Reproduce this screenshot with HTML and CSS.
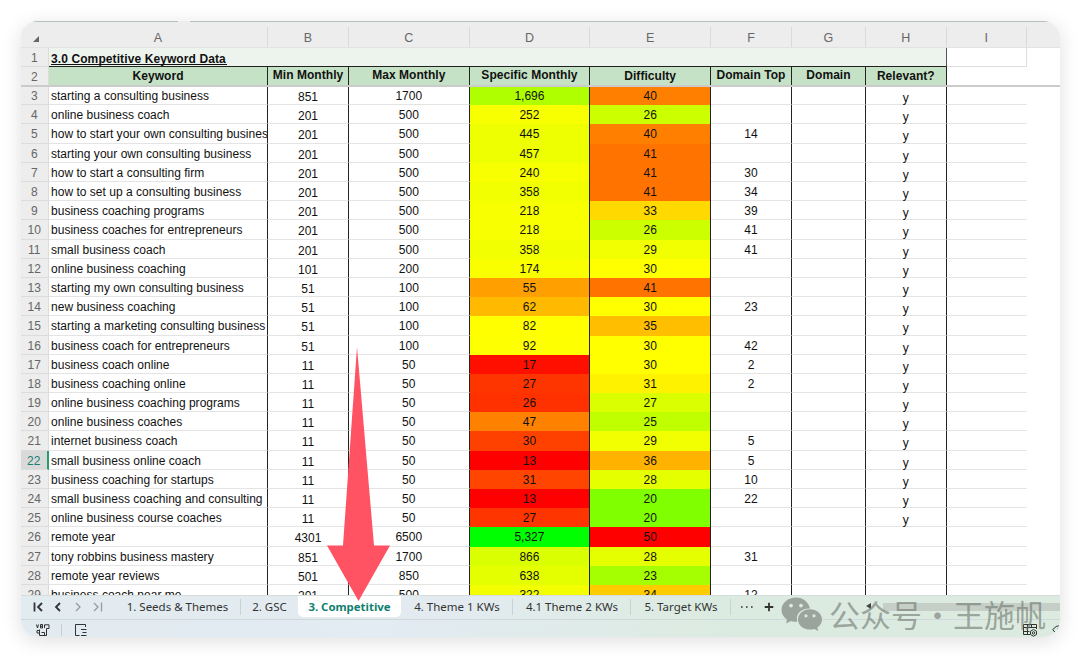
FILE: index.html
```html
<!DOCTYPE html>
<html lang="en">
  <head>
    <meta charset="UTF-8" />
    <meta name="viewport" content="width=device-width, initial-scale=1.0" />
    <title>Competitive Keyword Data</title>
    <link rel="stylesheet" href="styles.css">
  </head>
  <body>
    <div class="window">
      <div class="top-edge"><span></span><span></span></div>

      <div class="sheet">
        <div class="row letters">
          <div class="num"><i class="corner"></i></div>
          <div>A</div>
          <div>B</div>
          <div>C</div>
          <div>D</div>
          <div>E</div>
          <div>F</div>
          <div>G</div>
          <div>H</div>
          <div>I</div>
        </div>
        <div class="row title-row">
          <div class="num">1</div>
          <div class="title"><span>3.0 Competitive Keyword Data</span></div>
          <div class="empty"></div>
        </div>
        <div class="row head-row">
          <div class="num">2</div>
          <div class="cell low">Keyword</div>
          <div class="cell">Min Monthly</div>
          <div class="cell">Max Monthly</div>
          <div class="cell">Specific Monthly</div>
          <div class="cell low">Difficulty</div>
          <div class="cell">Domain Top</div>
          <div class="cell">Domain</div>
          <div class="cell low">Relevant?</div>
        </div>
        <div class="freeze-line"></div>
        <div class="rows" id="rows"></div>
      </div>

      <div class="tabs">
        <div class="nav">
          <svg width="12" height="12" viewBox="0 0 12 12"><path d="M2.5 1.5v9M10 2L6 6l4 4" /></svg>
          <svg width="12" height="12" viewBox="0 0 12 12"><path d="M8 2L4 6l4 4" /></svg>
          <svg class="off" width="12" height="12" viewBox="0 0 12 12"><path d="M4 2l4 4-4 4" /></svg>
          <svg class="off" width="12" height="12" viewBox="0 0 12 12"><path d="M2 2l4 4-4 4M9.5 1.5v9" /></svg>
        </div>
        <div class="tab t1">1. Seeds &amp; Themes</div>
        <div class="tab t2">2. GSC</div>
        <div class="tab active">3. Competitive</div>
        <div class="tab t4">4. Theme 1 KWs</div>
        <div class="tab t5">4.1 Theme 2 KWs</div>
        <div class="tab t6">5. Target KWs</div>
        <svg class="more" width="14" height="12" viewBox="0 0 14 12"><path d="M1 6h1.6M6 6h1.6M11 6h1.6" /></svg>
        <svg class="plus" width="10" height="10" viewBox="0 0 10 10"><path d="M5 .7v8.6M.7 5h8.6" /></svg>
        <div class="scroll"><i></i><b></b></div>
      </div>

      <div class="status">
        <svg class="s1" width="15" height="13" viewBox="0 0 15 13">
          <path d="M.5.5l1 3.500 1-3.500M4.500.5v3.500h2V.5zM4.500 2.300h2M8.500 4V.8H13v3.700h-2.500v7H8M3.500 6.500H1v2.500h2.500M3.500 5.500V11.500H8.500V8.500H5.500" />
        </svg>
        <i class="split"></i>
        <svg class="s2" width="14" height="12" viewBox="0 0 14 12">
          <path d="M11.500 3V.5H1.500v11h4M7 5.500h5.500M8.500 8.500h4M7 11.500h5.500" />
        </svg>
        <svg class="s3" width="16" height="14" viewBox="0 0 16 14">
          <path d="M8 11.500H1.500V1.500h13V6M1.500 4.500h13M5.500 1.500v10M1.500 8.500h6M9.500 1.500v3" />
          <path d="M11.500 6.500l3 1.700v3.300l-3 1.700-3-1.700V8.200z" />
          <circle cx="11.500" cy="9.900" r="1.200" />
        </svg>
        <svg class="s4" width="8" height="12" viewBox="0 0 8 12">
          <path d="M8 1.500Q4 1.500.7 5.500 2.500 8.500 5 9.500M8 3.700Q5.300 3.700 5.300 6.200 5.500 8 8 8" />
        </svg>
      </div>
    </div>

    <svg class="arrow" width="66" height="256" viewBox="0 0 66 256">
      <path d="M32 0L49 198.500H65L33.500 254 2 198.500H18z" />
    </svg>

    <div class="watermark">
      <svg width="41" height="34" viewBox="0 0 41 34">
        <path fill-rule="evenodd" d="M15 .5C7 .5.500 6 .500 13c0 4 2.300 7.400 5.600 9.700L5 26.500l5-2.500c2 .7 4 .9 6.200.8-2-8 4.200-13.500 12.800-13.200C27.600 5 21.800.5 15 .5zM10 6.700a1.900 1.900 0 1 1 0 3.800 1.900 1.900 0 0 1 0-3.800zM20 6.700a1.900 1.900 0 1 1 0 3.800 1.900 1.900 0 0 1 0-3.800z" />
        <path fill-rule="evenodd" d="M29 12.300c-6.600 0-12 4.500-12 10.100s5.400 10.100 12 10.100c1.500 0 3-.2 4.300-.6l4 2-1-3.300c2.900-2 4.700-4.900 4.700-8.200 0-5.600-5.400-10.100-12-10.100zM25 17.200a1.600 1.600 0 1 1 0 3.200 1.600 1.600 0 0 1 0-3.200zM33 17.200a1.600 1.600 0 1 1 0 3.200 1.600 1.600 0 0 1 0-3.200z" />
      </svg>
      <span>公众号</span><span class="dot">·</span><span>王施帆</span>
    </div>

    <script>
      // keyword, min, max, specific, difficulty, domain top, relevant
      const data = [
        ["starting a consulting business", 851, 1700, 1696, 40, "", "y"],
        ["online business coach", 201, 500, 252, 26, "", "y"],
        ["how to start your own consulting business", 201, 500, 445, 40, 14, "y"],
        ["starting your own consulting business", 201, 500, 457, 41, "", "y"],
        ["how to start a consulting firm", 201, 500, 240, 41, 30, "y"],
        ["how to set up a consulting business", 201, 500, 358, 41, 34, "y"],
        ["business coaching programs", 201, 500, 218, 33, 39, "y"],
        ["business coaches for entrepreneurs", 201, 500, 218, 26, 41, "y"],
        ["small business coach", 201, 500, 358, 29, 41, "y"],
        ["online business coaching", 101, 200, 174, 30, "", "y"],
        ["starting my own consulting business", 51, 100, 55, 41, "", "y"],
        ["new business coaching", 51, 100, 62, 30, 23, "y"],
        ["starting a marketing consulting business", 51, 100, 82, 35, "", "y"],
        ["business coach for entrepreneurs", 51, 100, 92, 30, 42, "y"],
        ["business coach online", 11, 50, 17, 30, 2, "y"],
        ["business coaching online", 11, 50, 27, 31, 2, "y"],
        ["online business coaching programs", 11, 50, 26, 27, "", "y"],
        ["online business coaches", 11, 50, 47, 25, "", "y"],
        ["internet business coach", 11, 50, 30, 29, 5, "y"],
        ["small business online coach", 11, 50, 13, 36, 5, "y"],
        ["business coaching for startups", 11, 50, 31, 28, 10, "y"],
        ["small business coaching and consulting", 11, 50, 13, 20, 22, "y"],
        ["online business course coaches", 11, 50, 27, 20, "", "y"],
        ["remote year", 4301, 6500, 5327, 50, "", ""],
        ["tony robbins business mastery", 851, 1700, 866, 28, 31, ""],
        ["remote year reviews", 501, 850, 638, 23, "", ""],
        ["business coach near me", 201, 500, 322, 34, 12, ""],
      ];

      // Red -> yellow -> green scale
      function scale(v, red, mid, green) {
        const toRed = (v - mid) / (red - mid);
        if (toRed > 0) {
          return `rgb(255, ${Math.round(255 * (1 - toRed))}, 0)`;
        }
        const toGreen = (v - mid) / (green - mid);
        return `rgb(${Math.round(255 * (1 - toGreen))}, 255, 0)`;
      }

      function addCell(row, text, cls, color) {
        const cell = document.createElement("div");
        cell.className = cls;
        cell.textContent = text;
        if (color) cell.style.backgroundColor = color;
        row.appendChild(cell);
      }

      const rowsEl = document.getElementById("rows");

      data.forEach((d, i) => {
        const row = document.createElement("div");
        row.className = "row";
        addCell(row, i + 3, i + 3 === 22 ? "num selected" : "num");
        addCell(row, d[0], "cell keyword");
        addCell(row, d[1], "cell min");
        addCell(row, d[2], "cell");
        addCell(row, d[3].toLocaleString("en-US"), "cell heat", scale(d[3], 13, 80, 5327));
        addCell(row, d[4], "cell heat", scale(d[4], 50, 30, 10));
        addCell(row, d[5], "cell");
        addCell(row, "", "cell");
        addCell(row, d[6], "cell relevant");
        addCell(row, "", "blank");
        rowsEl.appendChild(row);
      });
    </script>
  </body>
</html>
```
FILE: styles.css
```css
* {
  box-sizing: border-box;
}

body {
  margin: 0;
  height: 657px;
  padding: 21px 20px 20px 20.5px;
  overflow: hidden;
  background: #fff;
  font-family: "Liberation Sans", Arial, sans-serif;
  font-size: 12px;
  color: #111;
}

.window {
  height: 616px;
  display: flex;
  flex-direction: column;
  border-radius: 17px;
  overflow: hidden;
  background: #fff;
  box-shadow: 0 4px 20px rgba(0, 0, 0, 0.13);
}

.top-edge {
  height: 6px;
  padding-left: 12px;
  display: flex;
  gap: 12px;
  background: #eceeed;
}

.top-edge span {
  width: 145px;
  height: 1px;
  background: #b9bdbb;
}

.top-edge span + span {
  flex: 1;
  margin-right: 8px;
}

.sheet {
  height: 568px;
  overflow: hidden;
}

.row {
  display: grid;
  grid-template-columns: 28.5px 219px 81px 120.6px 120.7px 120.8px 80.8px 74.2px 80.5px 80.5px;
  grid-template-rows: 100%;
  height: 19.2px;
}

.letters {
  height: 20.5px;
  background: #ededed;
  border-bottom: 1px solid #e2e2e2;
  font-size: 12.5px;
  line-height: 22px;
  text-align: center;
  color: #666;
}

.letters div {
  border-right: 1px solid #dadada;
}

.letters .num {
  border-right: 0;
  border-bottom: 0;
}

.corner {
  display: block;
  margin: 9px 0 0 12px;
  border-left: 6px solid transparent;
  border-bottom: 6px solid #666;
  width: 0;
}

.num {
  background: #ededed;
  border-right: 1px solid #dcdcdc;
  border-bottom: 1px solid #dcdcdc;
  text-align: center;
  font-size: 12px;
  line-height: 20px;
  color: #666;
}

.selected {
  background: #d9d9d9;
  color: #16826f;
  border-right: 2px solid #21a06c;
}

.title-row {
  height: 19.3px;
}

.title {
  grid-column: 2 / 10;
  background: #edf4ee;
  border-right: 1px solid #555;
  border-bottom: 1px solid #222;
  padding-left: 2px;
  font-weight: bold;
  line-height: 23px;
  letter-spacing: 0.1px;
  white-space: nowrap;
}

.title span {
  display: block;
  width: 176px;
  height: 17px;
  border-bottom: 1px solid #111;
}

.empty {
  border-right: 1px solid #dedede;
  border-bottom: 1px solid #dedede;
}

.head-row .cell {
  background: #c6e2c6;
  border-bottom: 0;
  font-weight: bold;
  line-height: 17px;
  letter-spacing: 0.05px;
}

.head-row .low {
  line-height: 19px;
}

.freeze-line {
  height: 2px;
  margin-top: -1px;
  position: relative;
  background: #cbcbcb;
}

.rows {
  margin-top: -0.9px;
}

.cell {
  border-right: 1px solid #222;
  border-bottom: 1px solid #e4e4e4;
  text-align: center;
  line-height: 20px;
  white-space: nowrap;
  overflow: hidden;
}

.heat {
  border-bottom: 0;
}

.keyword {
  padding-left: 2px;
  text-align: left;
  letter-spacing: 0.02px;
}

.min {
  line-height: 23px;
}

.relevant {
  line-height: 24px;
  overflow: visible;
}

.blank {
  border-bottom: 1px solid #e4e4e4;
}

.tabs {
  height: 24.5px;
  display: flex;
  background: linear-gradient(90deg, #e2ebf0, #e3ebf1 40%, #dcebe1 65%, #dceae0);
  border-top: 1px solid #d5dddd;
  border-bottom: 1px solid #d0d9d9;
  font-family: "Noto Sans", "Open Sans", sans-serif;
  font-size: 11.5px;
  line-height: 21px;
  color: #333;
}

svg {
  fill: none;
  stroke: #333;
}

.nav {
  width: 96.5px;
  padding: 5px 0 0 11px;
  display: flex;
  gap: 8px;
}

.nav svg {
  stroke-width: 1.8;
}

.nav .off {
  stroke: #999;
  stroke-width: 1.3;
}

.tab {
  position: relative;
  text-align: center;
  white-space: nowrap;
}

.t1::after,
.t4::after,
.t5::after,
.t6::after {
  content: "";
  position: absolute;
  right: 0;
  top: 3px;
  width: 1px;
  height: 16px;
  background: #c9d2d3;
}

.t1 {
  width: 124px;
  padding-right: 3px;
}

.t2 {
  width: 57px;
}

.active {
  width: 103px;
  height: 21px;
  border-radius: 0 0 5px 5px;
  background: #fff;
  color: #0f8070;
  font-weight: bold;
  font-size: 11.4px;
}

.t4 {
  width: 112px;
}

.t5 {
  width: 118px;
}

.t6 {
  width: 100px;
}

.more {
  margin: 5px 10px 0 9px;
  stroke-width: 1.6;
}

.plus {
  margin-top: 6px;
  stroke-width: 1.8;
}

.scroll {
  flex: 1;
  margin: 7px 0 0 92px;
  height: 8px;
  display: flex;
}

.scroll i {
  width: 5px;
  border: 3px solid transparent;
  border-left: 0;
  border-right: 5px solid #444;
  height: 6px;
}

.scroll b {
  flex: 1;
  margin-left: 12px;
  background: #c5cec7;
}

.status {
  flex: 1;
  display: flex;
  padding: 4px 0 0 15px;
  background: linear-gradient(90deg, #e2ebf0, #e3ebf3 35%, #dcebe1 68%, #dcebe0);
}

.split {
  width: 1px;
  height: 12px;
  margin: 0 12px 0 10px;
  background: #c7cfd3;
}

.s3 {
  margin: -1px 14px 0 auto;
}

.arrow {
  position: absolute;
  left: 325px;
  top: 347px;
  fill: #ff5263;
  stroke: none;
}

.watermark {
  position: absolute;
  left: 781px;
  top: 597px;
  display: flex;
  font-family: "Noto Sans CJK SC", sans-serif;
  font-size: 31px;
  line-height: 34px;
  font-weight: 400;
  color: rgba(110, 118, 111, 0.62);
}

.watermark svg {
  margin-right: 7px;
  fill: #9aa49c;
  stroke: none;
}

.dot {
  width: 31px;
  text-align: center;
}
```
